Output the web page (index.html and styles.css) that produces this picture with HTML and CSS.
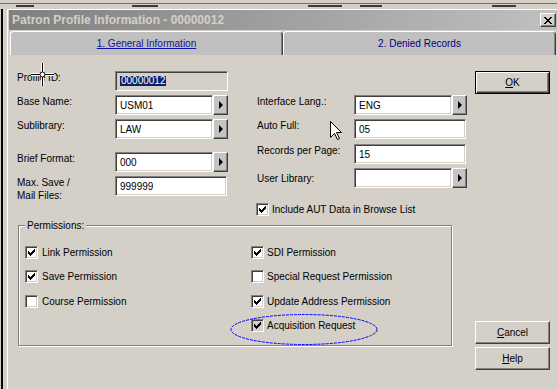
FILE: index.html
```html
<!DOCTYPE html>
<html>
<head>
<meta charset="utf-8">
<title>Patron Profile Information</title>
<link rel="stylesheet" href="styles.css">
</head>
<body>
<svg class="defs" width="0" height="0" aria-hidden="true">
  <defs>
    <symbol id="chk" viewBox="0 0 7 7">
      <rect x="6" y="0" width="1" height="1"/>
      <rect x="5" y="1" width="2" height="1"/>
      <rect x="0" y="2" width="1" height="1"/><rect x="4" y="2" width="3" height="1"/>
      <rect x="0" y="3" width="2" height="1"/><rect x="3" y="3" width="3" height="1"/>
      <rect x="0" y="4" width="5" height="1"/>
      <rect x="1" y="5" width="3" height="1"/>
      <rect x="2" y="6" width="1" height="1"/>
    </symbol>
    <symbol id="tri" viewBox="0 0 4 8">
      <path d="M0 0 L4 4 L0 8 Z"/>
    </symbol>
  </defs>
</svg>

<div class="bgstrip">
  <span class="frag f1"></span><span class="frag f2"></span><span class="frag f3"></span><span class="frag f4"></span><span class="frag f5"></span>
</div>

<div class="main">
  <div class="edge"></div>
  <div class="dialog">
    <div class="titlebar">
      <span class="title">Patron Profile Information - 00000012</span>
      <span class="close">
        <svg width="8" height="7" viewBox="0 0 8 7" shape-rendering="crispEdges">
          <rect x="0" y="0" width="2" height="1"/><rect x="6" y="0" width="2" height="1"/>
          <rect x="1" y="1" width="2" height="1"/><rect x="5" y="1" width="2" height="1"/>
          <rect x="2" y="2" width="4" height="1"/>
          <rect x="3" y="3" width="2" height="1"/>
          <rect x="2" y="4" width="4" height="1"/>
          <rect x="1" y="5" width="2" height="1"/><rect x="5" y="5" width="2" height="1"/>
          <rect x="0" y="6" width="2" height="1"/><rect x="6" y="6" width="2" height="1"/>
        </svg>
      </span>
    </div>

    <div class="tabs">
      <div class="tab tab1"><span class="tablink">1. General Information</span></div>
      <div class="tab tab2"><span>2. Denied Records</span></div>
    </div>

    <div class="body">
      <div class="formarea">
        <div class="fields">
          <div class="col col-left">
            <div class="frow">
              <span class="lbl">Profile ID:</span>
              <div class="input disabled w113"><span class="sel">00000012</span></div>
            </div>
            <div class="frow">
              <span class="lbl">Base Name:</span>
              <div class="input w98">USM01</div>
              <span class="drop"><svg width="4" height="8"><use href="#tri"/></svg></span>
            </div>
            <div class="frow gap13">
              <span class="lbl">Sublibrary:</span>
              <div class="input w98">LAW</div>
              <span class="drop"><svg width="4" height="8"><use href="#tri"/></svg></span>
            </div>
            <div class="frow">
              <span class="lbl">Brief Format:</span>
              <div class="input w98">000</div>
              <span class="drop"><svg width="4" height="8"><use href="#tri"/></svg></span>
            </div>
            <div class="frow last">
              <span class="lbl">Max. Save /<br>Mail Files:</span>
              <div class="input w112">999999</div>
            </div>
          </div>

          <div class="col col-right">
            <div class="frow">
              <span class="lbl">Interface Lang.:</span>
              <div class="input w98">ENG</div>
              <span class="drop"><svg width="4" height="8"><use href="#tri"/></svg></span>
            </div>
            <div class="frow gap5">
              <span class="lbl">Auto Full:</span>
              <div class="input w112">05</div>
            </div>
            <div class="frow">
              <span class="lbl">Records per Page:</span>
              <div class="input w112">15</div>
            </div>
            <div class="frow last">
              <span class="lbl lower">User Library:</span>
              <div class="input w98"></div>
              <span class="drop"><svg width="4" height="8"><use href="#tri"/></svg></span>
            </div>
            <div class="include">
              <span class="cb"><svg width="7" height="7" shape-rendering="crispEdges"><use href="#chk"/></svg></span>
              <span class="cbl">Include AUT Data in Browse List</span>
            </div>
          </div>
        </div>

        <fieldset class="perms">
          <legend>Permissions:</legend>
          <div class="pgrid">
            <div class="pitem"><span class="cb"><svg width="7" height="7" shape-rendering="crispEdges"><use href="#chk"/></svg></span><span>Link Permission</span></div>
            <div class="pitem right"><span class="cb"><svg width="7" height="7" shape-rendering="crispEdges"><use href="#chk"/></svg></span><span>SDI Permission</span></div>
            <div class="pitem"><span class="cb"><svg width="7" height="7" shape-rendering="crispEdges"><use href="#chk"/></svg></span><span>Save Permission</span></div>
            <div class="pitem right"><span class="cb"></span><span>Special Request Permission</span></div>
            <div class="pitem"><span class="cb"></span><span>Course Permission</span></div>
            <div class="pitem right"><span class="cb"><svg width="7" height="7" shape-rendering="crispEdges"><use href="#chk"/></svg></span><span>Update Address Permission</span></div>
            <div class="pitem empty"></div>
            <div class="pitem right"><span class="cb grey"><svg width="7" height="7" shape-rendering="crispEdges"><use href="#chk"/></svg></span><span>Acquisition Request</span></div>
          </div>
        </fieldset>
      </div>

      <div class="buttons">
        <div class="btn default"><span><u>O</u>K</span></div>
        <div class="spacer"></div>
        <div class="btn"><span><u>C</u>ancel</span></div>
        <div class="btn"><span><u>H</u>elp</span></div>
      </div>
    </div>
  </div>
</div>

<svg class="ellipse" width="150" height="34" viewBox="0 0 150 34">
  <ellipse cx="74" cy="16.5" rx="73" ry="15" fill="none" stroke="#0000ff" stroke-width="1" stroke-dasharray="3 1"/>
</svg>

<svg class="cursor" width="13" height="20" viewBox="0 0 13 20">
  <path d="M0.5 0.5 V16.5 L4.5 12.5 L7.5 18.5 L9.5 17.5 L6.5 11.5 H11.5 Z" fill="#fff" stroke="#000" stroke-width="1" stroke-linejoin="miter"/>
</svg>

<svg class="crosshair" width="23" height="23" viewBox="0 0 23 23">
  <g stroke="#fff" stroke-width="3">
    <line x1="11.5" y1="0" x2="11.5" y2="23"/>
    <line x1="0" y1="11.5" x2="23" y2="11.5"/>
  </g>
  <g stroke="#000" stroke-width="1">
    <line x1="11.5" y1="0" x2="11.5" y2="23"/>
    <line x1="0" y1="11.5" x2="23" y2="11.5"/>
  </g>
  <circle cx="11.5" cy="11.5" r="2.5" fill="#fff" stroke="#000" stroke-width="1"/>
</svg>
</body>
</html>
```

FILE: styles.css
```css
* { box-sizing: border-box; }
html, body { margin: 0; padding: 0; }
body {
  width: 557px;
  height: 389px;
  overflow: hidden;
  position: relative;
  background: #d4d0c8;
  font-family: "Liberation Sans", Arial, sans-serif;
  font-size: 10px;
  color: #000;
}
.defs { position: absolute; width: 0; height: 0; }

/* background window strip */
.bgstrip {
  height: 9px;
  display: flex;
  padding-top: 5px;
  background: linear-gradient(#d4d0c8 0 3px, #707070 3px 4px, #d4d0c8 4px);
}
.frag { height: 2px; background: #3a3a3a; display: block; }
.f1 { margin-left: 16px; width: 18px; }
.f2 { margin-left: 98px; width: 26px; }
.f3 { margin-left: 150px; width: 34px; }
.f4 { margin-left: 18px; width: 22px; }
.f5 { margin-left: 110px; width: 24px; }

.main { display: flex; height: 380px; }
.edge {
  width: 7px;
  background: linear-gradient(90deg, #d4d0c8 0 1px, #000 1px 3px, #d4d0c8 3px);
}
.dialog {
  flex: 1;
  display: flex;
  flex-direction: column;
  border-top: 1px solid #fff;
  border-left: 1px solid #fff;
  padding-left: 1px;
}

/* title bar */
.titlebar {
  height: 20px;
  background: linear-gradient(90deg, #808080, #c0c0c0);
  display: flex;
  align-items: center;
  justify-content: space-between;
  padding: 0 1px 0 3px;
}
.title { font-weight: bold; font-size: 12px; color: #d4d0c8; }
.close {
  width: 16px;
  height: 14px;
  background: #d4d0c8;
  border: 1px solid;
  border-color: #fff #404040 #404040 #fff;
  box-shadow: inset -1px -1px #808080;
  display: flex;
  align-items: center;
  justify-content: center;
}

/* tabs */
.tabs { height: 25px; padding: 1px 0 0 1px; display: flex; }
.tab {
  height: 24px;
  width: 273px;
  background: #c0c0c0;
  border-top: 1px solid #fff;
  border-left: 1px solid #fff;
  border-right: 1px solid #404040;
  box-shadow: inset -1px 0 #808080;
  border-radius: 4px 4px 0 0;
  display: flex;
  align-items: center;
  justify-content: center;
  color: #000080;
}
.tablink { text-decoration: underline; color: #1010a0; }

/* body */
.body { flex: 1; display: flex; }
.formarea { width: 466px; padding: 16px 0 0 8px; }
.fields { display: flex; }
.col { display: flex; flex-direction: column; }
.col-left { width: 240px; }
.col-right { padding-top: 24px; }

.frow { display: flex; align-items: flex-start; height: 20px; margin-bottom: 4px; }
.frow.gap13 { margin-bottom: 13px; }
.frow.gap5 { margin-bottom: 5px; }
.frow.last { margin-bottom: 0; }
.lbl { line-height: 13px; }
.col-left .lbl { width: 98px; }
.col-right .lbl { width: 97px; }
.lbl.lower { padding-top: 4px; }

.input {
  height: 20px;
  background: #fff;
  border: 1px solid;
  border-color: #808080 #fff #fff #808080;
  box-shadow: inset 1px 1px #404040, inset -1px -1px #d4d0c8;
  padding-left: 4px;
  display: flex;
  align-items: center;
}
.input.disabled { background: #d4d0c8; }
.w113 { width: 113px; }
.w98 { width: 98px; }
.w112 { width: 112px; }
.sel {
  background: #0a246a;
  color: #fff;
  line-height: 10px;
  padding: 0 0 0 1px;
}

.drop {
  width: 15px;
  height: 20px;
  background: #c4c4c4;
  border: 1px solid;
  border-color: #fff #404040 #404040 #fff;
  box-shadow: inset -1px -1px #808080;
  display: flex;
  align-items: center;
  justify-content: center;
}
.drop svg { fill: #000; margin-left: 1px; }

/* checkboxes */
.cb {
  width: 13px;
  height: 13px;
  flex: none;
  background: #fff;
  border: 1px solid;
  border-color: #808080 #fff #fff #808080;
  box-shadow: inset 1px 1px #404040, inset -1px -1px #d4d0c8;
  display: flex;
  align-items: center;
  justify-content: center;
}
.cb svg { fill: #000; }
.cb.grey { background: #d4d0c8; }

.include { display: flex; align-items: center; margin: 15px 0 0 -1px; }
.cbl { margin-left: 3px; }

/* permissions group */
.perms {
  margin: 3px 0 0 1px;
  width: 434px;
  min-width: 0;
  padding: 8px 0 8px 6px;
  border: 1px solid #808080;
  box-shadow: inset 1px 1px #fff, 1px 1px #fff;
}
.perms legend {
  padding: 0 2px;
  line-height: 13px;
  background: #d4d0c8;
}
.pgrid {
  display: grid;
  grid-template-columns: 226px 1fr;
  grid-template-rows: 24px 25px 24px 24px;
}
.pitem { display: flex; align-items: center; gap: 4px; }
.pitem.right { gap: 3px; }

/* buttons */
.buttons {
  width: 75px;
  display: flex;
  flex-direction: column;
  padding: 16px 0 19px;
}
.btn {
  height: 23px;
  width: 75px;
  display: flex;
  align-items: center;
  justify-content: center;
  border: 1px solid;
  border-color: #fff #404040 #404040 #fff;
  box-shadow: inset -1px -1px #808080;
}
.btn.default {
  border-color: #000;
  box-shadow: inset 1px 1px #fff, inset -1px -1px #404040, inset -2px -2px #808080;
}
.btn + .btn { margin-top: 3px; }
.spacer { flex: 1; }

/* overlays */
.ellipse { position: absolute; left: 230px; top: 313px; }
.cursor { position: absolute; left: 330px; top: 121px; }
.crosshair { position: absolute; left: 31px; top: 63px; }
```
